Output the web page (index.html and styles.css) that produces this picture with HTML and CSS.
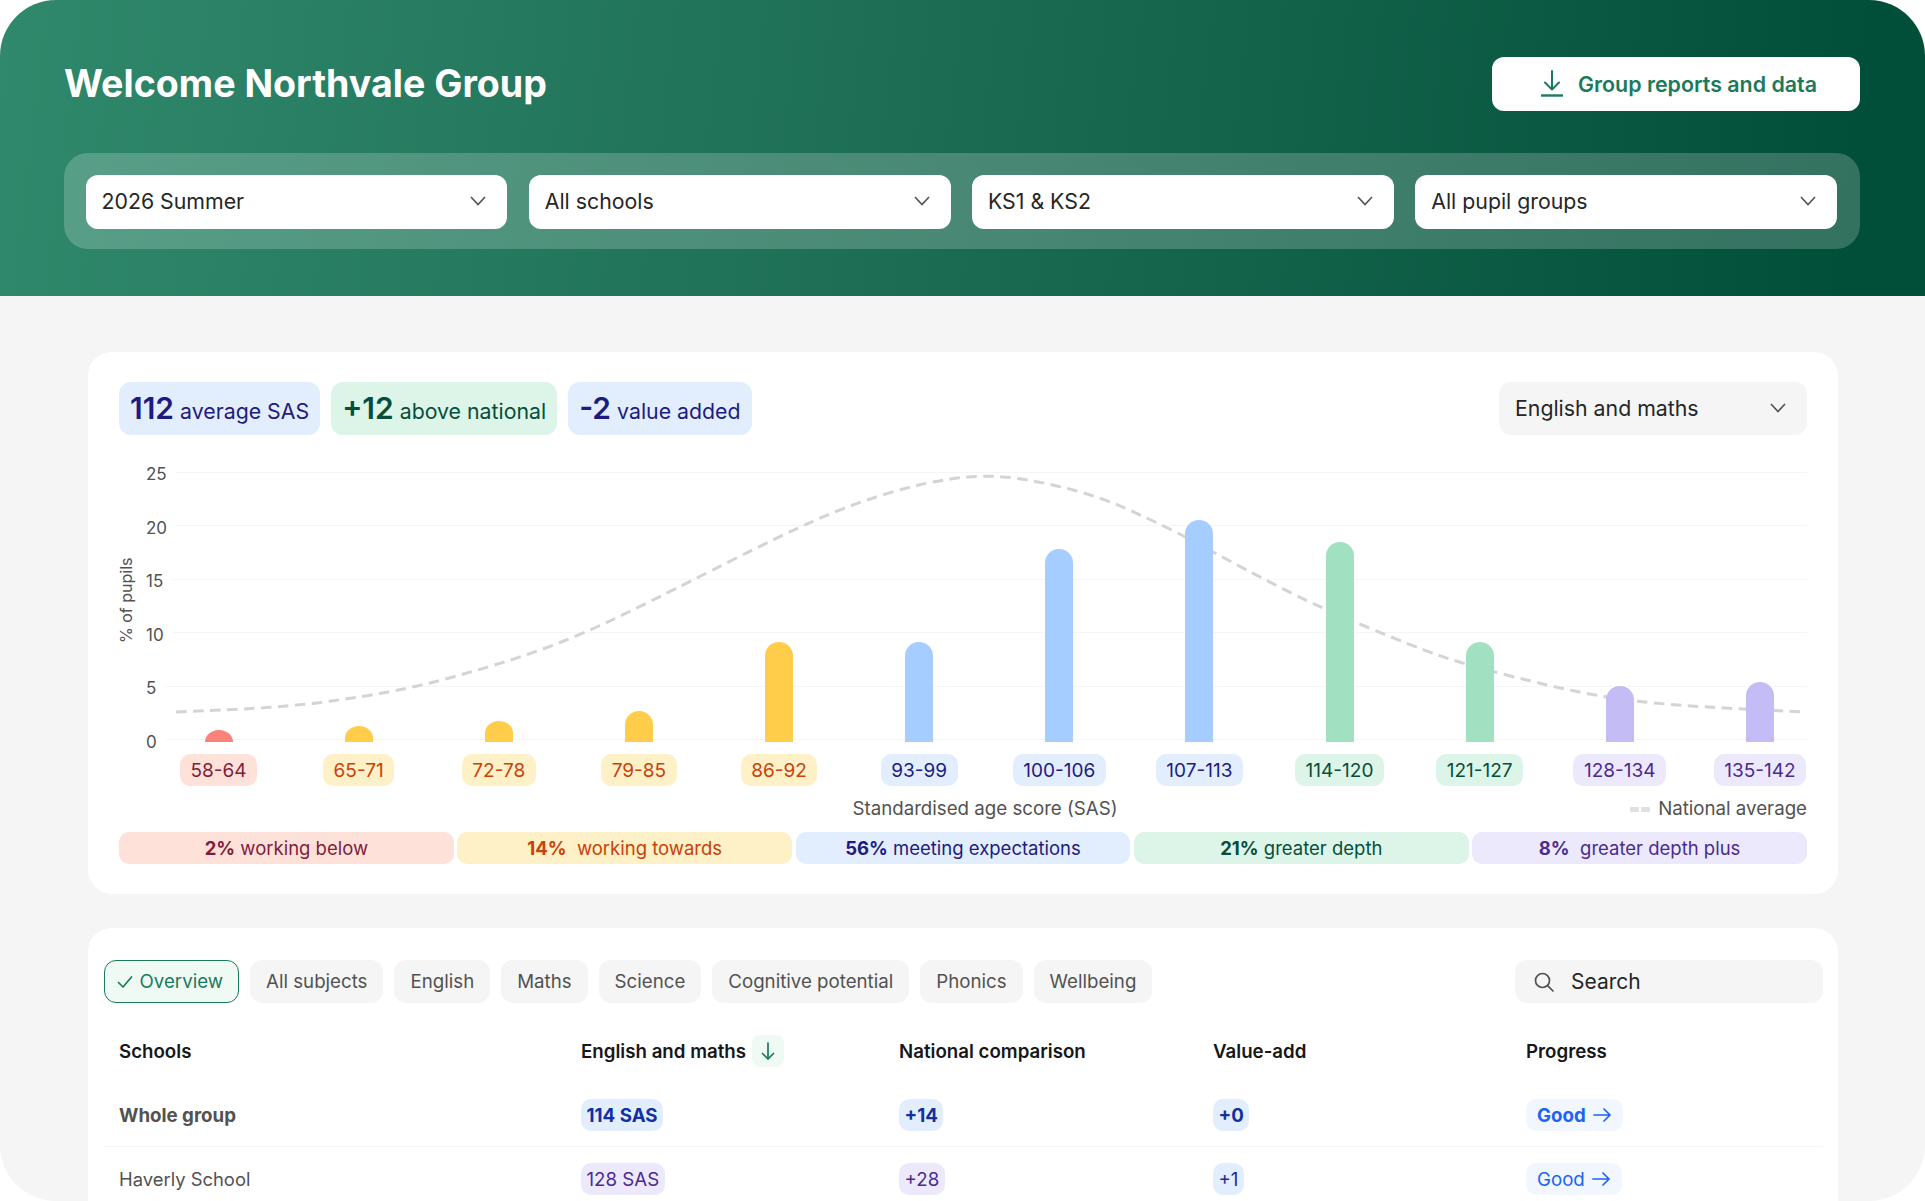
FILE: index.html
```html
<!DOCTYPE html>
<html lang="en">
<head>
  <meta charset="UTF-8" />
  <title>Northvale Group dashboard</title>
  <link rel="stylesheet" href="styles.css">
</head>
<body>
  <div class="page">
    <header class="hero">
      <div class="hero-top">
        <h1>Welcome Northvale Group</h1>
        <button class="report-btn">
          <svg class="report-icon" viewBox="0 0 24 27" fill="none" stroke="currentColor" stroke-width="2" stroke-linecap="round" stroke-linejoin="round">
            <path d="M12 1v18M5 12.5l7 7 7-7"/>
            <path d="M1 25.5h22" stroke-linecap="butt" stroke-width="2.4"/>
          </svg>
          Group reports and data
        </button>
      </div>
      <div class="filters">
        <div class="select">2026 Summer <svg class="chevron" viewBox="0 0 16 10"><path d="M1 1l7 7.5L15 1"/></svg></div>
        <div class="select">All schools <svg class="chevron" viewBox="0 0 16 10"><path d="M1 1l7 7.5L15 1"/></svg></div>
        <div class="select">KS1 &amp; KS2 <svg class="chevron" viewBox="0 0 16 10"><path d="M1 1l7 7.5L15 1"/></svg></div>
        <div class="select">All pupil groups <svg class="chevron" viewBox="0 0 16 10"><path d="M1 1l7 7.5L15 1"/></svg></div>
      </div>
    </header>

    <main class="content">
      <section class="card chart-card">
        <div class="chart-top">
          <div class="stat stat-blue"><b>112</b> average SAS</div>
          <div class="stat stat-green"><b>+12</b> above national</div>
          <div class="stat stat-blue"><b>-2</b> value added</div>
          <div class="select select-grey">English and maths <svg class="chevron" viewBox="0 0 16 10"><path d="M1 1l7 7.5L15 1"/></svg></div>
        </div>

        <div class="chart">
          <div class="y-title">% of pupils</div>
          <div class="plot">
            <div class="grid">
              <div class="grid-row"><span>25</span></div>
              <div class="grid-row"><span>20</span></div>
              <div class="grid-row"><span>15</span></div>
              <div class="grid-row"><span>10</span></div>
              <div class="grid-row"><span>5</span></div>
              <div class="grid-row"><span>0</span></div>
            </div>
            <svg class="curve" width="1661" height="288" viewBox="0 0 1661 288" fill="none">
              <path d="M30 250 Q106 247 135 244.5 Q164 242 192.5 238 Q221 234 249.5 228.5 Q278 223 307 215 Q336 207 364.5 198 Q393 189 419 178.5 Q445 168 469 156.5 Q493 145 517 133 Q541 121 587.5 97.5 Q634 74 667.5 59 Q701 44 738 32.5 Q775 21 808.5 16.5 Q842 12 872 16.5 Q902 21 929 28.5 Q956 36 977.5 45.5 Q999 55 1017.5 64 Q1036 73 1052.5 82 Q1069 91 1096 105.5 Q1123 120 1151.5 134 Q1180 148 1222 165.5 Q1264 183 1290.5 192.5 Q1317 202 1360.5 213 Q1404 224 1431 229.5 Q1458 235 1481.5 238 Q1505 241 1538.5 243.5 Q1572 246 1659 250"/>
            </svg>
            <div class="bins">
              <div class="bin"><div class="bar bar-short bar-red" style="height:12.3px"></div><span class="tag tag-red">58-64</span></div>
              <div class="bin"><div class="bar bar-short bar-amber" style="height:16.3px"></div><span class="tag tag-amber">65-71</span></div>
              <div class="bin"><div class="bar bar-short bar-amber" style="height:21.6px"></div><span class="tag tag-amber">72-78</span></div>
              <div class="bin"><div class="bar bar-amber" style="height:31px"></div><span class="tag tag-amber">79-85</span></div>
              <div class="bin"><div class="bar bar-amber" style="height:100.3px"></div><span class="tag tag-amber">86-92</span></div>
              <div class="bin"><div class="bar bar-blue" style="height:100.3px"></div><span class="tag tag-blue">93-99</span></div>
              <div class="bin"><div class="bar bar-blue" style="height:193.6px"></div><span class="tag tag-blue">100-106</span></div>
              <div class="bin"><div class="bar bar-blue" style="height:222px"></div><span class="tag tag-blue">107-113</span></div>
              <div class="bin"><div class="bar bar-green" style="height:200.3px"></div><span class="tag tag-green">114-120</span></div>
              <div class="bin"><div class="bar bar-green" style="height:100.3px"></div><span class="tag tag-green">121-127</span></div>
              <div class="bin"><div class="bar bar-purple" style="height:56.3px"></div><span class="tag tag-purple">128-134</span></div>
              <div class="bin"><div class="bar bar-purple" style="height:60px"></div><span class="tag tag-purple">135-142</span></div>
            </div>
          </div>
        </div>

        <div class="caption">
          <span></span>
          <span>Standardised age score (SAS)</span>
          <span class="legend"><i class="legend-dash"></i><i class="legend-dash"></i>National average</span>
        </div>

        <div class="bands">
          <div class="band tag-red"><b>2%</b> working below</div>
          <div class="band tag-amber"><b>14%</b>&nbsp; working towards</div>
          <div class="band tag-blue"><b>56%</b> meeting expectations</div>
          <div class="band tag-green"><b>21%</b> greater depth</div>
          <div class="band tag-purple"><b>8%</b>&nbsp; greater depth plus</div>
        </div>
      </section>

      <section class="card table-card">
        <div class="toolbar">
          <div class="tab tab-active">
            <svg class="check" viewBox="0 0 16 14" fill="none" stroke="currentColor" stroke-width="1.7" stroke-linecap="round" stroke-linejoin="round"><path d="M1.5 7.5l4.5 4.5L14.5 2"/></svg>
            Overview
          </div>
          <div class="tab">All subjects</div>
          <div class="tab">English</div>
          <div class="tab">Maths</div>
          <div class="tab">Science</div>
          <div class="tab">Cognitive potential</div>
          <div class="tab">Phonics</div>
          <div class="tab">Wellbeing</div>
          <div class="search">
            <svg class="search-icon" viewBox="0 0 20 20" fill="none" stroke="currentColor" stroke-width="1.7" stroke-linecap="round"><circle cx="8.5" cy="8.5" r="7"/><path d="M13.6 13.6l5.4 5.4"/></svg>
            Search
          </div>
        </div>

        <div class="row row-head">
          <div>Schools</div>
          <div class="sort-cell">English and maths
            <span class="sort-btn"><svg viewBox="0 0 14 20" fill="none" stroke="currentColor" stroke-width="1.7" stroke-linecap="round" stroke-linejoin="round"><path d="M7 2v16M1.5 12.5L7 18l5.5-5.5"/></svg></span>
          </div>
          <div>National comparison</div>
          <div>Value-add</div>
          <div>Progress</div>
        </div>

        <div class="row row-total">
          <div>Whole group</div>
          <div><span class="pill pill-blue">114 SAS</span></div>
          <div><span class="pill pill-blue">+14</span></div>
          <div><span class="pill pill-blue">+0</span></div>
          <div><span class="pill pill-good">Good <svg class="arrow" viewBox="0 0 18 14" fill="none" stroke="currentColor" stroke-width="1.7" stroke-linecap="round" stroke-linejoin="round"><path d="M1 7h16M11 1l6 6-6 6"/></svg></span></div>
        </div>

        <div class="row">
          <div>Haverly School</div>
          <div><span class="pill pill-purple">128 SAS</span></div>
          <div><span class="pill pill-purple">+28</span></div>
          <div><span class="pill pill-blue">+1</span></div>
          <div><span class="pill pill-good">Good <svg class="arrow" viewBox="0 0 18 14" fill="none" stroke="currentColor" stroke-width="1.7" stroke-linecap="round" stroke-linejoin="round"><path d="M1 7h16M11 1l6 6-6 6"/></svg></span></div>
        </div>
      </section>
    </main>
  </div>
</body>
</html>
```

FILE: styles.css
```css
* {
  box-sizing: border-box;
}
html, body {
  margin: 0;
  height: 100%;
  background: #fff;
  overflow: hidden;
}
body {
  font-family: Inter, "Liberation Sans", sans-serif;
  color: #262626;
}
.page {
  height: 1201px;
  background: #f5f5f5;
  border-radius: 56px;
  overflow: hidden;
}

/* header */
.hero {
  height: 296px;
  padding: 57px 65px 0 64px;
  background: linear-gradient(97deg, #30896c 0%, #1b6b52 50%, #024f39 96%, #024f39 100%);
}
.hero-top {
  display: flex;
  justify-content: space-between;
  align-items: center;
  height: 53px;
  margin-bottom: 43px;
}
h1 {
  margin: 0;
  color: #fff;
  font-size: 37.6px;
  font-weight: 700;
}
.report-btn {
  display: flex;
  align-items: center;
  justify-content: center;
  gap: 14px;
  width: 368px;
  height: 54px;
  padding: 0 0 0 5px;
  border: 0;
  border-radius: 12px;
  background: #fff;
  color: #1b7a5c;
  font-family: inherit;
  font-size: 21.4px;
  font-weight: 600;
}
.report-icon {
  width: 24px;
  height: 27px;
}
.filters {
  display: flex;
  gap: 21.5px;
  height: 96px;
  padding: 21.5px 23px 20.5px 21.5px;
  border-radius: 24px;
  background: rgba(255, 255, 255, 0.2);
}
.select {
  flex: 1;
  display: flex;
  align-items: center;
  justify-content: space-between;
  padding: 0 21px 1px 16px;
  border-radius: 12px;
  background: #fff;
  font-size: 21.3px;
}
.chevron {
  width: 16px;
  height: 10px;
  fill: none;
  stroke: #525252;
  stroke-width: 1.6;
}

/* content */
.content {
  padding: 56px 87px 0 88px;
}
.card {
  border-radius: 24px;
  background: #fff;
}
.chart-card {
  height: 542px;
  padding: 30px 31px 30px 31px;
  margin-bottom: 34px;
}
.chart-top {
  display: flex;
  gap: 11px;
  height: 53px;
  margin-bottom: 27px;
}
.stat {
  display: flex;
  align-items: baseline;
  gap: 6px;
  padding: 8px 11px 0;
  border-radius: 12px;
  font-size: 21.3px;
}
.stat b {
  font-size: 30px;
  font-weight: 600;
}
.stat-blue {
  background: #e2eefe;
  color: #1e1b7e;
}
.stat-green {
  background: #dcf5e8;
  color: #064e3b;
}
.select-grey {
  flex: none;
  width: 308px;
  margin-left: auto;
  background: #f5f5f5;
}

/* chart */
.chart {
  display: flex;
}
.y-title {
  align-self: flex-start;
  width: 14px;
  height: 276px;
  margin-right: 13px;
  writing-mode: vertical-rl;
  transform: rotate(180deg);
  text-align: center;
  color: #525252;
  font-size: 16px;
  line-height: 14px;
}
.plot {
  position: relative;
  flex: 1;
  height: 324px;
}
.grid {
  display: flex;
  flex-direction: column;
  justify-content: space-between;
  height: 288px;
}
.grid-row {
  display: flex;
  align-items: center;
  gap: 9px;
  height: 20px;
  color: #525252;
  font-size: 17px;
}
.grid-row span {
  padding-top: 4px;
}
.grid-row::after {
  content: "";
  flex: 1;
  height: 1px;
  background: #f5f5f5;
}
.curve {
  position: absolute;
  left: 0;
  top: 0;
}
.curve path {
  stroke: #d4d4d4;
  stroke-width: 3;
  stroke-dasharray: 10.5 6.5;
}
.bins {
  position: absolute;
  left: 58.5px;
  right: 33px;
  top: 0;
  bottom: 0;
  display: flex;
  justify-content: space-between;
}
.bin {
  width: 28px;
  display: flex;
  flex-direction: column;
  justify-content: flex-end;
  align-items: center;
}
.bar {
  flex: none;
  width: 28px;
  margin-bottom: 11.7px;
  border-radius: 14px 14px 0 0;
}
.bar-short {
  border-radius: 14px 14px 0 0 / 12px 12px 0 0;
}
.bar-red { background: #f98379; }
.bar-amber { background: #ffcd4a; }
.bar-blue { background: #a6cdff; }
.bar-green { background: #a1e0c0; }
.bar-purple { background: #c4bcf4; }
.tag {
  flex: none;
  height: 32px;
  padding: 0 10.5px;
  border-radius: 10px;
  font-size: 19px;
  line-height: 33px;
  white-space: nowrap;
}
.tag-red { background: #fee2da; color: #7f1d3d; }
.tag-amber { background: #fef0c7; color: #c9420a; }
.tag-blue { background: #e2eefe; color: #1e1b7e; }
.tag-green { background: #dcf5e8; color: #064e3b; }
.tag-purple { background: #ebe9fb; color: #4c2a92; }

.caption {
  display: grid;
  grid-template-columns: 1fr auto 1fr;
  height: 22px;
  margin: 12px 0 12px;
  padding-left: 44px;
  color: #525252;
  font-size: 18.7px;
  line-height: 22px;
}
.legend {
  display: flex;
  justify-content: flex-end;
  align-items: center;
  gap: 2px;
}
.legend-dash {
  width: 9px;
  height: 5px;
  border-radius: 1px;
  background: #e0e0e0;
}
.legend-dash:nth-child(2) {
  margin-right: 6px;
}
.bands {
  display: flex;
  gap: 3.5px;
}
.band {
  flex: 1;
  height: 32px;
  border-radius: 10px;
  font-size: 18.5px;
  line-height: 33px;
  text-align: center;
}
.band b {
  font-weight: 700;
}

/* table */
.table-card {
  padding: 32px 15px 0 15.5px;
  height: 320px;
}
.toolbar {
  display: flex;
  gap: 11px;
  height: 43px;
  margin-bottom: 32px;
}
.tab {
  display: flex;
  align-items: center;
  gap: 7px;
  padding: 0 16px;
  border-radius: 12px;
  background: #f5f5f5;
  color: #525252;
  font-size: 18.7px;
}
.tab-active {
  padding: 0 15px 0 12px;
  border: 1.5px solid #1b7a5c;
  background: #effaf5;
  color: #1b7a5c;
}
.check {
  width: 16px;
  height: 14px;
}
.search {
  display: flex;
  align-items: center;
  gap: 17px;
  width: 308px;
  margin-left: auto;
  padding-left: 19px;
  border-radius: 12px;
  background: #f5f5f5;
  font-size: 21px;
}
.search-icon {
  width: 20px;
  height: 20px;
  color: #525252;
}
.row {
  display: grid;
  grid-template-columns: 462px 318px 314px 313px 1fr;
  align-items: center;
  padding: 16px 0 15px 15.5px;
  border-bottom: 1px solid #f5f5f5;
  color: #525252;
  font-size: 18.4px;
}
.row-head {
  height: 32px;
  padding: 0 0 0 15.5px;
  margin-bottom: 16px;
  border-bottom: 0;
  color: #171717;
  font-size: 18.7px;
  font-weight: 600;
}
.row-total {
  font-size: 18.7px;
  font-weight: 700;
}
.sort-cell {
  display: flex;
  align-items: center;
  gap: 6px;
}
.sort-btn {
  display: flex;
  align-items: center;
  justify-content: center;
  width: 32px;
  height: 32px;
  border-radius: 8px;
  background: #effaf5;
  color: #1b7a5c;
}
.sort-btn svg {
  width: 14px;
  height: 20px;
}
.pill {
  display: inline-flex;
  align-items: center;
  gap: 7px;
  height: 32px;
  padding: 0 5.5px;
  border-radius: 10px;
  font-size: 18.7px;
}
.pill-blue { background: #e2eefe; color: #1e2a9a; }
.row-total .pill-blue { color: #1230a0; }
.pill-purple { background: #ebe9fb; color: #4c2a92; }
.pill-good {
  padding: 0 12px 0 11px;
  background: #f2f7ff;
  color: #1d64f2;
}
.arrow {
  width: 18px;
  height: 14px;
}
```
